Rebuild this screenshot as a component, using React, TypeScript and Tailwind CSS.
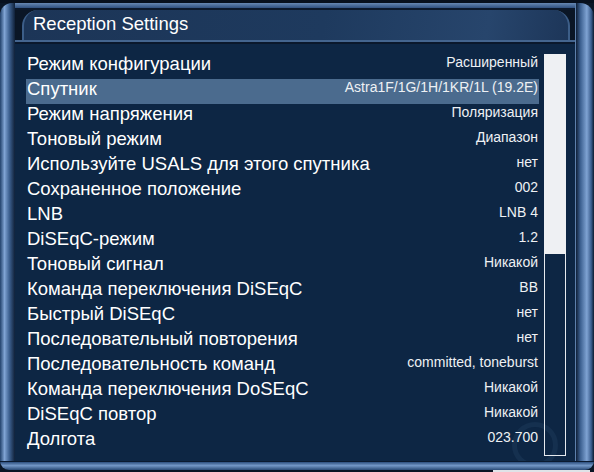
const ROWS: { label: string; value: string }[] = [
  { label: "Режим конфигурации", value: "Расширенный" },
  { label: "Спутник", value: "Astra1F/1G/1H/1KR/1L (19.2E)" },
  { label: "Режим напряжения", value: "Поляризация" },
  { label: "Тоновый режим", value: "Диапазон" },
  { label: "Используйте USALS для этого спутника", value: "нет" },
  { label: "Сохраненное положение", value: "002" },
  { label: "LNB", value: "LNB 4" },
  { label: "DiSEqC-режим", value: "1.2" },
  { label: "Тоновый сигнал", value: "Никакой" },
  { label: "Команда переключения DiSEqC", value: "BB" },
  { label: "Быстрый DiSEqC", value: "нет" },
  { label: "Последовательный повторения", value: "нет" },
  { label: "Последовательность команд", value: "committed, toneburst" },
  { label: "Команда переключения DoSEqC", value: "Никакой" },
  { label: "DiSEqC повтор", value: "Никакой" },
  { label: "Долгота", value: "023.700" },
];

const SELECTED = 1;

function SettingRow({ label, value, active }: { label: string; value: string; active: boolean }) {
  return (
    <div
      className={`flex h-[25px] items-start justify-between pl-[1px] pr-[1px] ${
        active ? "bg-[#4b6b8e]" : ""
      }`}
    >
      <span className="text-[18.5px] leading-[20px] text-white">{label}</span>
      <span className="text-[14px] leading-[17px] text-[#eef1f4]">{value}</span>
    </div>
  );
}

export default function App() {
  return (
    <div className="relative flex h-[472px] w-[594px] flex-col overflow-hidden bg-[#0a1626] font-['Liberation_Sans',Arial,sans-serif]">
      {/* outer top edge */}
      <div className="h-[3px] bg-[#07101e]" />

      <div className="flex h-[458px]">
        {/* left pillar */}
        <div className="w-[15px] rounded-tl-[12px] bg-[linear-gradient(to_right,#22426c,#80a4d4_30%,#3d6191_62%,#0f2038)]" />

        <div className="flex min-w-0 flex-1 flex-col">
          {/* top bevel */}
          <div className="h-[5px] bg-[linear-gradient(to_bottom,#6688b4,#2f5080)]" />
          <div className="h-[2px] bg-[#0b182c]" />

          {/* title band */}
          <div className="ml-[7px] mr-[5px] flex h-[30px] items-start rounded-tl-[16px] rounded-tr-[16px] border-l-2 border-r-2 border-[#3c5e88] bg-[linear-gradient(100deg,#1c3557,#1e3a5e_55%,#27456c_85%,#1d3659)] pl-[9px] pt-[3px]">
            <span className="text-[18.5px] leading-[22px] text-white">Reception Settings</span>
          </div>
          <div className="h-[2px] bg-[#44658f]" />
          <div className="h-[2px] bg-[#0a182c]" />

          {/* content */}
          <div className="relative flex flex-1 overflow-hidden bg-[#0d2644] pl-[11px] pr-[9px] pt-[10px]">
            <div className="pointer-events-none absolute left-[497px] top-[378px] h-[46px] w-[46px] rounded-full border-[5px] border-[#15304f]" />
            <div className="relative flex w-[513px] flex-col">
              {ROWS.map((row, i) => (
                <SettingRow key={row.label} label={row.label} value={row.value} active={i === SELECTED} />
              ))}
            </div>
            <div className="relative ml-[5px] flex h-[402px] w-[22px] flex-col">
              <div className="h-[200px] bg-[#eef0f3]" />
              <div className="flex-1 border-x border-b border-[#e6eaef]" />
            </div>
          </div>
        </div>

        {/* right pillar */}
        <div className="w-[19px] rounded-tr-[14px] border-l border-[#5d80ac] bg-[linear-gradient(to_right,#0f2038,#3d6191_25%,#7fa3d3_60%,#3a5c8c_85%,#0c1a2e)]" />
      </div>

      {/* bottom bevel */}
      <div className="h-[9px] rounded-b-[10px] border-t border-[#0a1a30] bg-[linear-gradient(to_bottom,#2d4f7e,#7397c6_45%,#2a4a76)]" />

      {/* bottom strip */}
      <div className="flex h-[2px]">
        <div className="flex-1 bg-[#0a1424]" />
        <div className="w-[97px] bg-[#dfe3e8]" />
        <div className="w-[4px] bg-[#0a1424]" />
      </div>
    </div>
  );
}
